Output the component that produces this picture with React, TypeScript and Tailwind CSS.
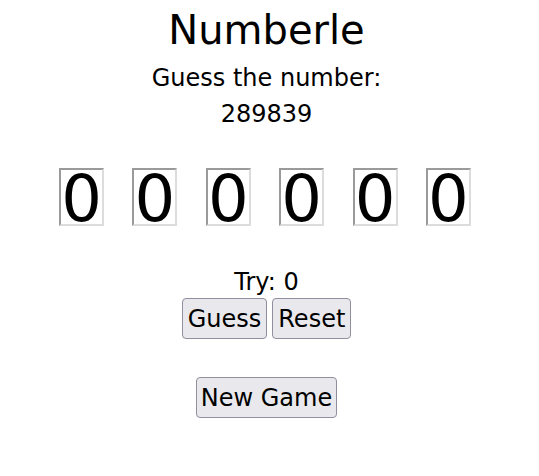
import { useState } from "react";

const font = { fontFamily: '"DejaVu Sans", Verdana, sans-serif' };

export default function App() {
  const [digits] = useState([0, 0, 0, 0, 0, 0]);
  const [tries] = useState(0);

  return (
    <div
      className="w-[533px] text-center text-black font-['DejaVu_Sans',Verdana,sans-serif]"
      style={font}
    >
      <h1 className="text-[40px] leading-[60px]">Numberle</h1>
      <p className="text-[24px] leading-[36px]">Guess the number:</p>
      <p className="text-[24px] leading-[36px]">289839</p>

      <div className="mt-[36px] flex justify-center gap-[28.4px] pr-[3px]">
        {digits.map((d, i) => (
          <input
            key={i}
            readOnly
            value={d}
            className="h-[58px] w-[45px] border-2 border-t-[#9a9a9a] border-l-[#9a9a9a] border-b-[#dcdcdc] border-r-[#dcdcdc] bg-white px-0 pt-[4px] pb-0 text-center text-[64px] leading-[50px] text-black outline-none"
            style={font}
          />
        ))}
      </div>

      <p className="mt-[42px] text-[24px] leading-[28px]">Try: {tries}</p>

      <div className="mt-[2px] flex justify-center gap-[5px]">
        <button className="h-[41px] rounded-[4px] border border-[#8f8f9d] bg-[#e9e9ed] px-[5px] pt-[2px] text-[24px] leading-[37px]">
          Guess
        </button>
        <button className="h-[41px] rounded-[4px] border border-[#8f8f9d] bg-[#e9e9ed] px-[5px] pt-[2px] text-[24px] leading-[37px]">
          Reset
        </button>
      </div>

      <div className="mt-[38px] flex justify-center">
        <button className="h-[41px] rounded-[4px] border border-[#8f8f9d] bg-[#e9e9ed] px-[4px] pt-[2px] text-[24px] leading-[37px]">
          New Game
        </button>
      </div>
    </div>
  );
}
